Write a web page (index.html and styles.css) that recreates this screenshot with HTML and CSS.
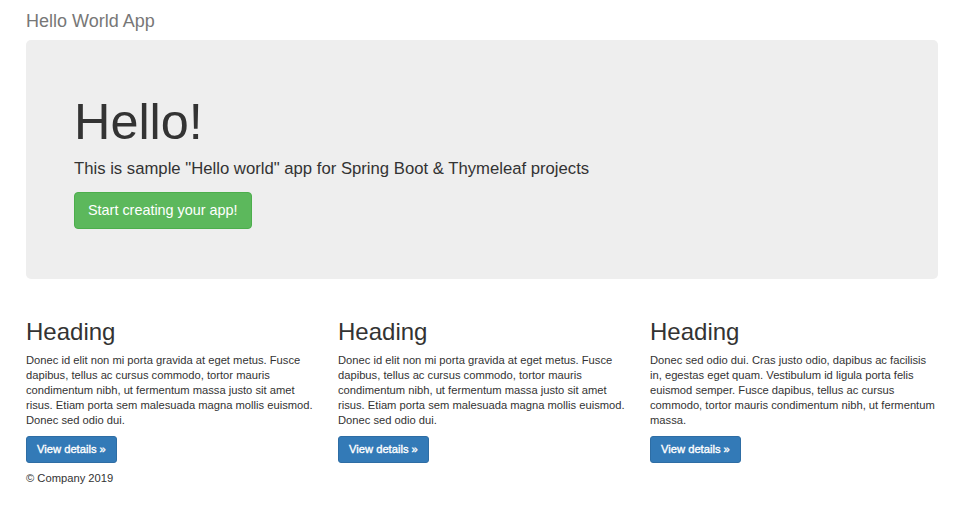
FILE: index.html
```html
<!DOCTYPE html>
<html lang="en">
<head>
<meta charset="utf-8">
<title>Hello World App</title>
<link rel="stylesheet" href="styles.css">
</head>
<body>
<div class="container">
  <div class="brand">Hello World App</div>
  <div class="jumbotron">
    <h1 class="jumbo-title">Hello!</h1>
    <p class="lead">This is sample "Hello world" app for Spring Boot &amp; Thymeleaf projects</p>
    <a class="btn btn-success" href="#">Start creating your app!</a>
  </div>
  <div class="row">
    <div class="col">
      <h2 class="heading">Heading</h2>
      <p class="text">Donec id elit non mi porta gravida at eget metus. Fusce dapibus, tellus ac cursus commodo, tortor mauris condimentum nibh, ut fermentum massa justo sit amet risus. Etiam porta sem malesuada magna mollis euismod. Donec sed odio dui.</p>
      <a class="btn btn-primary" href="#">View details »</a>
    </div>
    <div class="col">
      <h2 class="heading">Heading</h2>
      <p class="text">Donec id elit non mi porta gravida at eget metus. Fusce dapibus, tellus ac cursus commodo, tortor mauris condimentum nibh, ut fermentum massa justo sit amet risus. Etiam porta sem malesuada magna mollis euismod. Donec sed odio dui.</p>
      <a class="btn btn-primary" href="#">View details »</a>
    </div>
    <div class="col">
      <h2 class="heading">Heading</h2>
      <p class="text">Donec sed odio dui. Cras justo odio, dapibus ac facilisis in, egestas eget quam. Vestibulum id ligula porta felis euismod semper. Fusce dapibus, tellus ac cursus commodo, tortor mauris condimentum nibh, ut fermentum massa.</p>
      <a class="btn btn-primary" href="#">View details »</a>
    </div>
  </div>
  <footer class="footer">© Company 2019</footer>
</div>
</body>
</html>
```
FILE: styles.css
```css
* { box-sizing: border-box; }
html, body { margin: 0; padding: 0; background: #fff; }
body {
  font-family: "Liberation Sans", Arial, Helvetica, sans-serif;
  font-size: 11.2px;
  line-height: 15px;
  color: #333;
}
.container {
  width: 912px;
  margin-left: 26px;
  padding-top: 11px;
}
.brand {
  font-size: 18px;
  line-height: 20px;
  color: #777;
  margin-bottom: 9px;
}
.jumbotron {
  background: #eee;
  border-radius: 5px;
  padding: 38px 48px 50px;
  height: 239px;
}
.jumbo-title {
  font-size: 50.4px;
  line-height: 55px;
  font-weight: 500;
  margin: 16px 0 8px;
  color: #333;
}
.lead {
  font-size: 16.7px;
  line-height: 24px;
  margin: 0 0 11px;
  font-weight: 300;
}
.btn {
  display: inline-block;
  text-decoration: none;
  border: 1px solid transparent;
  color: #fff;
}
.btn-success {
  background: #5cb85c;
  border-color: #4cae4c;
  font-size: 14.4px;
  line-height: 19px;
  padding: 8px 13px;
  border-radius: 4px;
}
.btn-primary {
  background: #337ab7;
  border-color: #2e6da4;
  font-size: 11.2px;
  line-height: 15px;
  padding: 5px 10px;
  border-radius: 3px;
  -webkit-text-stroke: 0.35px #fff;
}
.row {
  display: grid;
  grid-template-columns: repeat(3, 288px);
  column-gap: 24px;
  margin-top: 40px;
}
.heading {
  font-size: 24px;
  line-height: 26px;
  font-weight: 500;
  margin: 0 0 8px;
}
.text {
  margin: 0 0 8px;
}
.footer {
  margin-top: 8px;
}
```
